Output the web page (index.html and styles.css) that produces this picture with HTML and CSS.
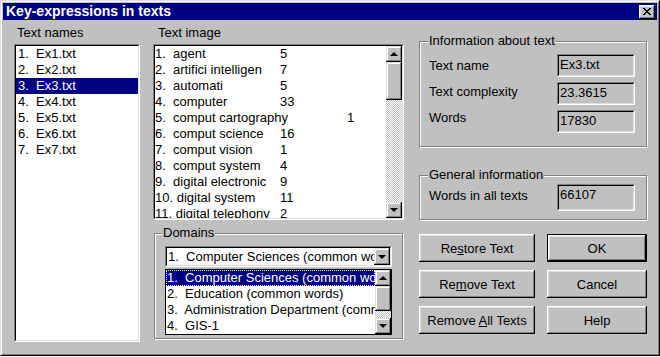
FILE: index.html
```html
<!DOCTYPE html>
<html lang="en">
<head>
  <meta charset="UTF-8" />
  <title>Key-expressions in texts</title>
  <link rel="stylesheet" href="styles.css">
</head>
<body>
  <div class="window">
    <div class="frame">
      <div class="titlebar">
        <span class="title">Key-expressions in texts</span>
        <button class="close-btn">
          <svg width="8" height="7" viewBox="0 0 8 7"><path d="M0 0h2v1h1v1h2V1h1V0h2v1H7v1H6v1H5v1h1v1h1v1h1v1H6V6H5V5H3v1H2v1H0V6h1V5h1V4h1V3H2V2H1V1H0z"/></svg>
        </button>
      </div>

      <div class="dialog">
        <!-- left column -->
        <div class="col col-names">
          <div class="caption names-caption">Text names</div>
          <div class="sunken names-list">
            <div class="sunken-inner rows">
              <div class="row">1.  Ex1.txt</div>
              <div class="row">2.  Ex2.txt</div>
              <div class="row selected">3.  Ex3.txt</div>
              <div class="row">4.  Ex4.txt</div>
              <div class="row">5.  Ex5.txt</div>
              <div class="row">6.  Ex6.txt</div>
              <div class="row">7.  Ex7.txt</div>
            </div>
          </div>
        </div>

        <!-- middle column -->
        <div class="col col-image">
          <div class="caption image-caption">Text image</div>
          <div class="sunken image-list">
            <div class="sunken-inner list-body">
              <div class="rows image-rows">
                <div class="row"><span class="term">1.  agent</span>5</div>
                <div class="row"><span class="term">2.  artifici intelligen</span>7</div>
                <div class="row"><span class="term">3.  automati</span>5</div>
                <div class="row"><span class="term">4.  computer</span>33</div>
                <div class="row"><span class="term term-wide">5.  comput cartography</span>1</div>
                <div class="row"><span class="term">6.  comput science</span>16</div>
                <div class="row"><span class="term">7.  comput vision</span>1</div>
                <div class="row"><span class="term">8.  comput system</span>4</div>
                <div class="row"><span class="term">9.  digital electronic</span>9</div>
                <div class="row"><span class="term">10. digital system</span>11</div>
                <div class="row"><span class="term">11. digital telephony</span>2</div>
              </div>
              <div class="vscroll">
                <div class="sb-btn"><span class="arrow-up"></span></div>
                <div class="sb-thumb thumb-image"></div>
                <div class="sb-track"></div>
                <div class="sb-btn"><span class="arrow-down"></span></div>
              </div>
            </div>
          </div>

          <fieldset class="group domains">
            <legend>Domains</legend>
            <div class="sunken combo">
              <div class="sunken-inner combo-body">
                <span class="combo-text">1.  Computer Sciences (common words)</span>
                <div class="sb-btn combo-btn"><span class="arrow-down"></span></div>
              </div>
            </div>
            <div class="drop-list">
              <div class="rows drop-rows">
                <div class="row selected focused">1.  Computer Sciences (common words)</div>
                <div class="row">2.  Education (common words)</div>
                <div class="row">3.  Administration Department (common words)</div>
                <div class="row">4.  GIS-1</div>
              </div>
              <div class="vscroll">
                <div class="sb-btn"><span class="arrow-up"></span></div>
                <div class="sb-thumb thumb-drop"></div>
                <div class="sb-track"></div>
                <div class="sb-btn"><span class="arrow-down"></span></div>
              </div>
            </div>
          </fieldset>
        </div>

        <!-- right column -->
        <div class="col col-info">
          <fieldset class="group info-group">
            <legend>Information about text</legend>
            <div class="info-grid">
              <div class="info-labels">
                <div class="info-label">Text name</div>
                <div class="info-label">Text complexity</div>
                <div class="info-label">Words</div>
              </div>
              <div class="info-fields">
                <div class="sunken field"><div class="sunken-inner field-inner">Ex3.txt</div></div>
                <div class="sunken field"><div class="sunken-inner field-inner">23.3615</div></div>
                <div class="sunken field"><div class="sunken-inner field-inner">17830</div></div>
              </div>
            </div>
          </fieldset>

          <fieldset class="group general-group">
            <legend>General information</legend>
            <div class="general-row">
              <div class="info-label general-label">Words in all texts</div>
              <div class="sunken field field-tall"><div class="sunken-inner field-inner">66107</div></div>
            </div>
          </fieldset>

          <div class="buttons">
            <button class="btn">Re<u>s</u>tore Text</button>
            <button class="btn btn-default">OK</button>
            <button class="btn">Re<u>m</u>ove Text</button>
            <button class="btn">Cancel</button>
            <button class="btn">Remove <u>A</u>ll Texts</button>
            <button class="btn">Help</button>
          </div>
        </div>
      </div>
    </div>
  </div>
</body>
</html>
```

FILE: styles.css
```css
* {
  box-sizing: border-box;
}
body {
  margin: 0;
  background: #fff;
  font-family: "Liberation Sans", Arial, sans-serif;
  font-size: 13px;
  color: #000;
}
.window {
  width: 660px;
  height: 356px;
  background: #c0c0c0;
  border: 1px solid;
  border-color: #dfdfdf #000 #000 #dfdfdf;
}
.frame {
  height: 100%;
  padding: 1px;
  border: 1px solid;
  border-color: #fff #808080 #808080 #fff;
}

/* title bar */
.titlebar {
  height: 17px;
  background: #000080;
  color: #fff;
  display: flex;
  align-items: center;
  justify-content: space-between;
  padding: 0 2px 0 3px;
}
.title {
  font-weight: bold;
  font-size: 14px;
  line-height: 17px;
}
.close-btn {
  width: 16px;
  height: 14px;
  padding: 0;
  border: none;
  background: #c0c0c0;
  display: flex;
  align-items: center;
  justify-content: center;
  box-shadow: inset -1px -1px #000, inset 1px 1px #fff, inset -2px -2px #808080, inset 2px 2px #dfdfdf;
}
.close-btn svg {
  display: block;
  shape-rendering: crispEdges;
}

/* layout */
.dialog {
  display: flex;
  padding: 5px 0 0 11px;
}
.col-names {
  width: 126px;
  margin-right: 13px;
}
.col-image {
  width: 251px;
  margin-right: 15px;
}
.col-info {
  width: 228px;
  margin-top: 8px;
}
.caption {
  height: 19px;
  line-height: 16px;
}
.names-caption {
  padding-left: 3px;
}
.image-caption {
  padding-left: 5px;
}

/* sunken 3d frames */
.sunken {
  border: 1px solid;
  border-color: #808080 #fff #fff #808080;
}
.sunken-inner {
  height: 100%;
  border: 1px solid;
  border-color: #000 #dfdfdf #dfdfdf #000;
}

/* lists */
.rows {
  background: #fff;
  overflow: hidden;
}
.row {
  height: 16px;
  line-height: 16px;
  white-space: pre;
  overflow: hidden;
}
.row.selected {
  background: #000080;
  color: #fff;
}
.names-list {
  height: 298px;
}
.names-list .row {
  padding-left: 2px;
}
.image-list {
  height: 176px;
}
.list-body {
  display: flex;
}
.image-rows {
  flex: 1;
}
.term {
  display: inline-block;
  width: 125px;
}
.term-wide {
  width: 192px;
}

/* scrollbars */
.vscroll {
  width: 16px;
  display: flex;
  flex-direction: column;
  flex-shrink: 0;
}
.sb-btn,
.sb-thumb {
  background: #c0c0c0;
  box-shadow: inset -1px -1px #000, inset 1px 1px #dfdfdf, inset -2px -2px #808080, inset 2px 2px #fff;
}
.sb-btn {
  height: 16px;
  flex-shrink: 0;
  display: flex;
  align-items: center;
  justify-content: center;
}
.thumb-image {
  height: 38px;
}
.thumb-drop {
  height: 25px;
}
.sb-track {
  flex: 1;
  background: repeating-conic-gradient(#c0c0c0 0% 25%, #fff 0% 50%) 0 0 / 2px 2px;
}
.arrow-up,
.arrow-down {
  width: 0;
  height: 0;
  border-left: 4px solid transparent;
  border-right: 4px solid transparent;
}
.arrow-up {
  border-bottom: 4px solid #000;
}
.arrow-down {
  border-top: 4px solid #000;
}

/* group boxes */
.group {
  margin: 0;
  padding: 0;
  min-width: 0;
  border: 1px solid #808080;
  box-shadow: 1px 1px 0 #fff, inset 1px 1px 0 #fff;
}
.group legend {
  margin-left: 7px;
  padding: 0 1px;
  line-height: 16px;
  background: #c0c0c0;
}
.domains {
  margin: 5px 0 0 1px;
  width: 249px;
  height: 114px;
}
.combo {
  width: 227px;
  height: 21px;
  margin: 5px 0 0 10px;
  background: #fff;
}
.combo-body {
  display: flex;
  justify-content: space-between;
}
.combo-text {
  flex: 1;
  line-height: 17px;
  padding-left: 1px;
  white-space: pre;
  overflow: hidden;
}
.combo-btn {
  width: 16px;
  height: 17px;
}
.drop-list {
  width: 227px;
  height: 66px;
  margin: 2px 0 0 10px;
  border: 1px solid #000;
  display: flex;
}
.drop-rows {
  flex: 1;
}
.drop-rows .row {
  padding-left: 1px;
}
.row.focused {
  outline: 1px dotted #ffff80;
  outline-offset: -1px;
}

/* information fields */
.info-group {
  height: 114px;
}
.info-group legend,
.general-group legend {
  margin-left: 8px;
}
.info-grid {
  display: flex;
  padding-left: 9px;
}
.info-labels {
  width: 128px;
  display: flex;
  flex-direction: column;
  gap: 10px;
  padding-top: 9px;
}
.info-label {
  line-height: 16px;
}
.info-fields {
  display: flex;
  flex-direction: column;
  gap: 5px;
  padding-top: 5px;
}
.field {
  width: 78px;
  height: 23px;
}
.field-inner {
  padding: 1px 0 0 1px;
  line-height: 16px;
}
.field-tall {
  height: 27px;
  margin-top: 1px;
}
.general-group {
  margin-top: 20px;
  height: 53px;
}
.general-row {
  display: flex;
  padding-left: 9px;
}
.general-label {
  width: 128px;
  padding-top: 5px;
}

/* buttons */
.buttons {
  display: grid;
  grid-template-columns: 116px 100px;
  grid-auto-rows: 28px;
  column-gap: 12px;
  row-gap: 8px;
  margin-top: 14px;
}
.btn {
  font: inherit;
  padding: 0;
  border: none;
  background: #c0c0c0;
  color: #000;
  box-shadow: inset -1px -1px #000, inset 1px 1px #fff, inset -2px -2px #808080, inset 2px 2px #dfdfdf;
}
.btn-default {
  border: 1px solid #000;
}
```
